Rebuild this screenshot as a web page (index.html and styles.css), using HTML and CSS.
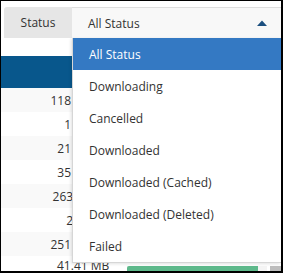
FILE: index.html
```html
<!DOCTYPE html>
<html lang="en">
<head>
  <meta charset="UTF-8">
  <title>Status filter</title>
  <link rel="stylesheet" href="styles.css">
</head>
<body>
  <div class="frame">
    <div class="toolbar">
      <div class="filter">
        <span class="filter-label">Status</span>
        <div class="filter-select">
          <span>All Status</span>
          <svg class="caret" width="10" height="6" viewBox="0 0 10 6"><path d="M0 6 L5 0.5 L10 6 Z" fill="#1b4f7f"/></svg>
        </div>
      </div>
    </div>

    <div class="grid">
      <div class="grid-head"></div>
      <div class="grid-row"><span class="num">118</span></div>
      <div class="grid-row"><span class="num">1</span></div>
      <div class="grid-row"><span class="num">21</span></div>
      <div class="grid-row"><span class="num">35</span></div>
      <div class="grid-row"><span class="num"><span class="wide">2634</span></span></div>
      <div class="grid-row"><span class="num"><span class="wide">24</span></span></div>
      <div class="grid-row"><span class="num">251</span></div>
      <div class="grid-row total">
        <span class="size">41.41 MB</span>
        <span class="bar"><span class="bar-fill"></span></span>
        <span class="bar-rest"></span>
      </div>
    </div>

    <ul class="options">
      <li class="active">All Status</li>
      <li>Downloading</li>
      <li>Cancelled</li>
      <li>Downloaded</li>
      <li>Downloaded (Cached)</li>
      <li>Downloaded (Deleted)</li>
      <li>Failed</li>
    </ul>
  </div>
</body>
</html>
```

FILE: styles.css
```css
html, body {
  margin: 0;
  padding: 0;
  background: #fff;
}

body {
  font-family: 'Open Sans', 'Noto Sans', sans-serif;
  font-size: 12px;
  color: #333;
}

.frame {
  position: relative;
  box-sizing: border-box;
  width: 283px;
  height: 273px;
  border: 1px solid #000;
  border-right-width: 2px;
  border-bottom-width: 2px;
  overflow: hidden;
}

.toolbar {
  padding: 6px 0 0 3px;
}

.filter {
  display: flex;
  height: 31px;
}

.filter-label {
  width: 68px;
  display: flex;
  align-items: center;
  justify-content: center;
  background: #e6e6e6;
  border-radius: 3px 0 0 0;
}

.filter-select {
  flex: 1;
  display: flex;
  align-items: center;
  justify-content: space-between;
  box-sizing: border-box;
  padding: 0 14px 0 16px;
  background: #f8f8f8;
  border-top: 1px solid #dedede;
}

.caret {
  display: block;
}

.grid {
  margin-top: 18px;
}

.grid-head {
  height: 32px;
  background: #08578c;
}

.grid-row {
  height: 24px;
  display: flex;
  align-items: center;
}

.grid-row:nth-child(even) {
  background: #f9f9f9;
}

.num {
  width: 70px;
  display: flex;
  justify-content: flex-end;
  white-space: nowrap;
}

.wide {
  margin-right: -9px;
}

.total {
  align-items: flex-start;
  padding-top: 1px;
  box-sizing: border-box;
}

.size {
  margin-left: 56px;
  width: 70px;
}

.bar {
  display: block;
  width: 140px;
  height: 12px;
  margin-top: 9px;
  background: #f4f4f4;
}

.bar-fill {
  display: block;
  width: 131px;
  height: 100%;
  background: #5eb98b;
  border-radius: 2px 0 0 2px;
}

.bar-rest {
  display: block;
  flex: 1;
  height: 12px;
  margin: 9px 0 0 3px;
  background: #bdbdbd;
}

.options {
  position: absolute;
  top: 37px;
  left: 71px;
  right: 0;
  margin: 0;
  padding: 0;
  list-style: none;
  background: #fff;
  border-left: 1px solid #d6d6d6;
  border-bottom: 1px solid #d6d6d6;
  box-shadow: -1px 1px 3px rgba(0, 0, 0, 0.12);
}

.options li {
  height: 32px;
  display: flex;
  align-items: center;
  padding-left: 16px;
}

.options li.active {
  background: #3479c3;
  color: #fff;
}
```
